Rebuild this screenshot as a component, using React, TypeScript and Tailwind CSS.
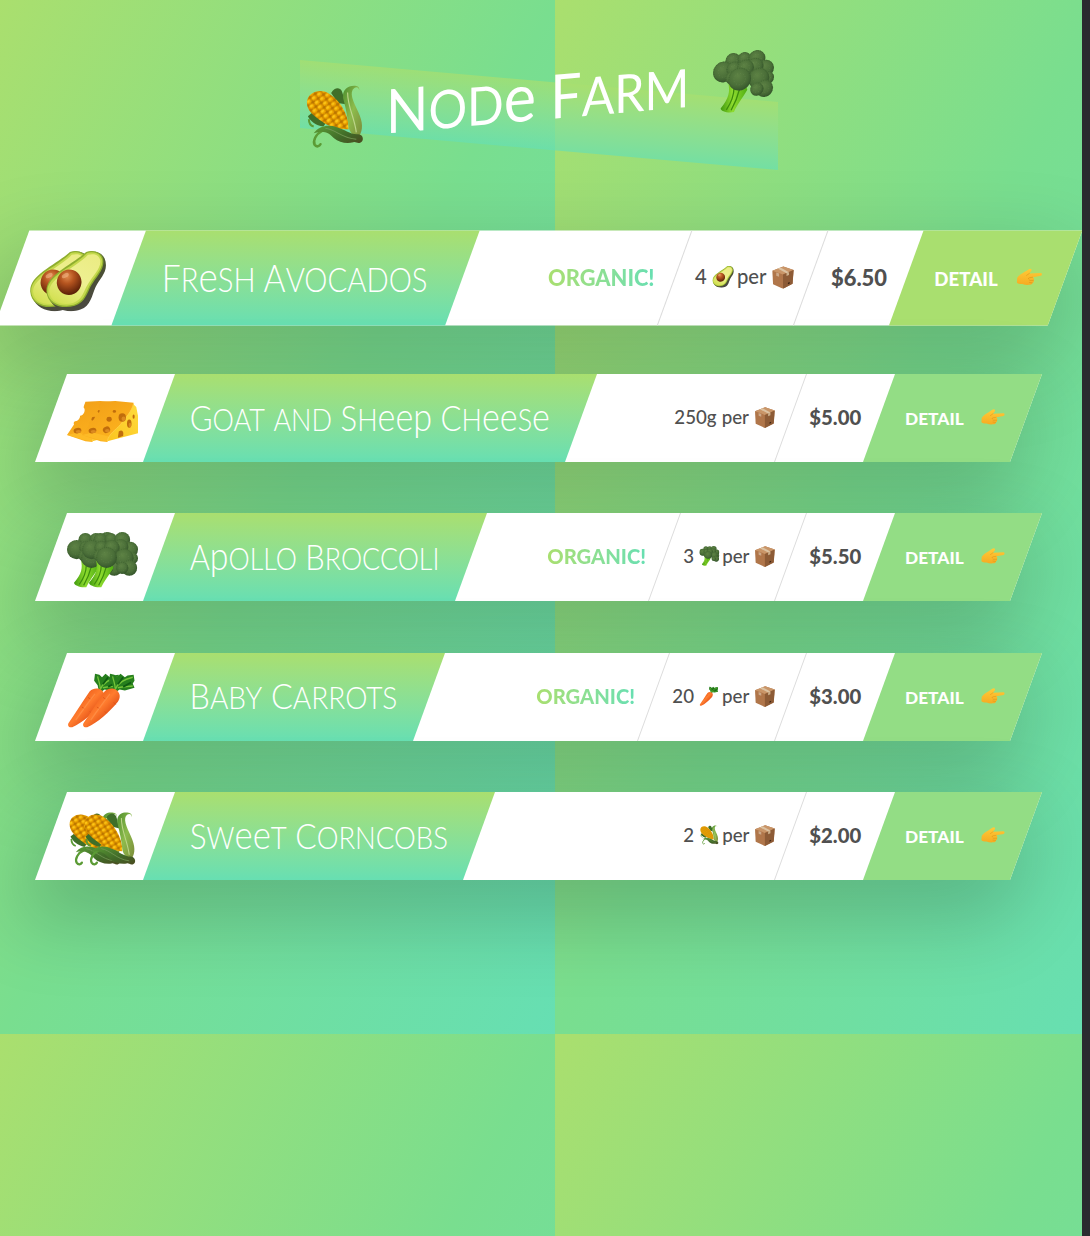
import React from "react";

type IconProps = { className?: string };

function Defs() {
  return (
    <svg width="0" height="0" className="absolute" aria-hidden="true">
      <defs>
        <pattern id="kernels" width="6.4" height="5.8" patternUnits="userSpaceOnUse" patternTransform="rotate(-32)">
          <rect width="6.4" height="5.8" fill="#b87300" />
          <ellipse cx="3.2" cy="2.9" rx="2.9" ry="2.6" fill="#eda400" />
          <ellipse cx="2.9" cy="2.4" rx="1.6" ry="1.2" fill="#ffcc1a" />
        </pattern>
        <linearGradient id="cobShade" x1="0" y1="1" x2="1" y2="0">
          <stop offset="0" stopColor="#a55b00" stopOpacity=".55" />
          <stop offset=".4" stopColor="#e09000" stopOpacity="0" />
          <stop offset="1" stopColor="#b46a00" stopOpacity=".25" />
        </linearGradient>
        <linearGradient id="husk" x1="0" y1="0" x2="1" y2="1">
          <stop offset="0" stopColor="#4f8f2e" />
          <stop offset=".5" stopColor="#8dbb4c" />
          <stop offset="1" stopColor="#7b8b3a" />
        </linearGradient>
        <linearGradient id="leafDark" x1="0" y1="0" x2="1" y2="1">
          <stop offset="0" stopColor="#5b9b35" />
          <stop offset=".6" stopColor="#406a28" />
          <stop offset="1" stopColor="#4b4a20" />
        </linearGradient>
        <radialGradient id="floret" cx=".42" cy=".35" r=".65">
          <stop offset="0" stopColor="#5d8244" />
          <stop offset=".65" stopColor="#4a6e38" />
          <stop offset="1" stopColor="#37572d" />
        </radialGradient>
        <linearGradient id="stalk" x1="0" y1="0" x2="1" y2="0">
          <stop offset="0" stopColor="#3f9a0d" />
          <stop offset=".45" stopColor="#8fdc2f" />
          <stop offset="1" stopColor="#4fae12" />
        </linearGradient>
        <linearGradient id="avoSkin" x1=".3" y1="0" x2=".8" y2="1">
          <stop offset="0" stopColor="#6f8f2c" />
          <stop offset=".5" stopColor="#4a4f33" />
          <stop offset="1" stopColor="#4b4746" />
        </linearGradient>
        <linearGradient id="avoFlesh" x1=".8" y1="0" x2=".2" y2="1">
          <stop offset="0" stopColor="#ebec84" />
          <stop offset=".5" stopColor="#eef092" />
          <stop offset="1" stopColor="#d3e052" />
        </linearGradient>
        <radialGradient id="pit" cx=".35" cy=".32" r=".7">
          <stop offset="0" stopColor="#e08a4c" />
          <stop offset=".4" stopColor="#b5541f" />
          <stop offset="1" stopColor="#5d2108" />
        </radialGradient>
        <linearGradient id="cheeseTop" x1="0" y1="0" x2=".6" y2="1">
          <stop offset="0" stopColor="#f19d17" />
          <stop offset="1" stopColor="#fdb41f" />
        </linearGradient>
        <linearGradient id="cheeseSide" x1="1" y1="0" x2="0" y2="1">
          <stop offset="0" stopColor="#ffdc3c" />
          <stop offset="1" stopColor="#fbc31f" />
        </linearGradient>
        <linearGradient id="carrot" x1="0" y1="0" x2="1" y2="1">
          <stop offset=".25" stopColor="#ee5f1c" />
          <stop offset=".48" stopColor="#ff7c2e" />
          <stop offset=".75" stopColor="#dd4712" />
        </linearGradient>
        <linearGradient id="hand" x1="0" y1="0" x2="0" y2="1">
          <stop offset="0" stopColor="#ffcb38" />
          <stop offset="1" stopColor="#f6ab22" />
        </linearGradient>
      </defs>
    </svg>
  );
}

function Corn({ className }: IconProps) {
  return (
    <svg viewBox="0 0 64 64" className={className} aria-hidden="true">
      <path d="M28 7C32 1 37 2 39 6c2 5 2 9 4 14l-8-2z" fill="#3f6f29" />
      <path d="M4 29c3 6 8 10 16 12l3-4L8 26z" fill="#3f6f29" />
      <path d="M5 32c0 4 2 7 5 8" fill="none" stroke="#5b9b35" strokeWidth="2" />
      <path d="M3 15C3 4 17 1 25 7c11 7 22 24 21 39-8 0-20-4-27-10C8 28 3 22 3 15z" fill="url(#kernels)" />
      <path d="M3 15C3 4 17 1 25 7c11 7 22 24 21 39-8 0-20-4-27-10C8 28 3 22 3 15z" fill="url(#cobShade)" />
      <path
        d="M57 7c1-5-5-6-10-5-6 2-8 7-6 14 2 8 4 17 5 27 1 8 7 12 11 11 4-6 4-14-1-25C51 18 46 8 52 4c3-2 5 1 5 3z"
        fill="url(#husk)"
      />
      <path d="M45 8c0 15 7 26 9 42" fill="none" stroke="#bdd58a" strokeWidth="1.2" />
      <path d="M19 45c-7 3-10 10-8 14 2 3 5 2 6 0" fill="none" stroke="#5b9b35" strokeWidth="2.6" strokeLinecap="round" />
      <path
        d="M10 47c6-7 15-8 24-4 8 3 14 9 22 9 6 1 6 8 2 9-3 1-5-2-7-1-7 1-15-1-20-6-5-6-11-10-21-7z"
        fill="url(#leafDark)"
      />
      <path d="M22 43c11 2 17 12 32 14" fill="none" stroke="#6e9350" strokeWidth="1" />
    </svg>
  );
}

const FLORETS: [number, number, number][] = [
  [21, 9, 8], [33, 8, 7], [46, 9, 9], [11, 20, 11], [55, 20, 9], [44, 17, 9], [22, 18, 8],
  [34, 18, 9], [57, 30, 7], [48, 30, 11], [54, 41, 9], [46, 41, 7], [20, 27, 7], [28, 29, 12],
];

function Broccoli({ className }: IconProps) {
  return (
    <svg viewBox="0 0 64 64" className={className} aria-hidden="true">
      <path d="M16 32c2 9 1 16-8 26 0 3 8 6 14 5 3-7 9-14 14-22l-3-8z" fill="url(#stalk)" />
      <path d="M22 38c0 8-3 15-8 22M28 39c-2 8-5 15-9 22" fill="none" stroke="#3c8c0c" strokeWidth="1.4" />
      {FLORETS.map(([x, y, r], i) => (
        <g key={i}>
          <circle cx={x} cy={y} r={r} fill="url(#floret)" />
          <circle cx={x} cy={y} r={r - 0.7} fill="none" stroke="#36582a" strokeWidth="1" strokeDasharray="1 1.5" opacity=".5" />
          <circle cx={x} cy={y} r={r * 0.5} fill="none" stroke="#76995b" strokeWidth=".9" strokeDasharray=".9 2.2" opacity=".4" />
        </g>
      ))}
    </svg>
  );
}

function Avocado({ className }: IconProps) {
  return (
    <svg viewBox="0 0 64 64" className={className} aria-hidden="true">
      <path d="M46 1c11-2 18 4 18 14 0 9-7 15-11 23-4 9-5 20-16 24-13 5-30-1-33-12z" fill="url(#avoSkin)" />
      <path d="M43 1c9-3 17 1 18 8 2 10-7 18-13 28-4 8-6 17-17 21C17 62 2 57 1 43 0 25 28 15 43 1z" fill="#8fae2f" />
      <path d="M44 2c8-2 15 1 16 8 1 9-8 17-13 26-5 9-6 17-17 21C17 60 3 55 2 43 1 26 30 17 44 2z" fill="#c4d84c" />
      <path d="M45 4c8-2 12 1 13 6 1 8-8 16-13 25-5 8-6 17-16 20C17 58 5 54 4 43 4 28 32 18 45 4z" fill="url(#avoFlesh)" />
      <ellipse cx="25" cy="33" rx="13" ry="13.5" transform="rotate(20 25 33)" fill="url(#pit)" />
      <ellipse cx="21" cy="26" rx="4" ry="2.2" fill="#f7c193" opacity=".5" transform="rotate(-30 21 26)" />
    </svg>
  );
}

function Cheese({ className }: IconProps) {
  return (
    <svg viewBox="0 0 64 64" className={className} aria-hidden="true">
      <path d="M57 11l5 5 2 10v20l-35 9-4-3z" fill="url(#cheeseSide)" />
      <path
        d="M0 48l8-12c-1-2 0-4 3-4 2-1 4-3 4-6 3 0 6-4 5-8-2-2 0-4 1-8l17-1 21 2c-2 10-9 17-15 25-6 7-13 10-15 20l-8-1z"
        fill="url(#cheeseTop)"
      />
      <path d="M0 48l21 6 8 1 3-5-20-5-12 3z" fill="#ffc12b" opacity=".7" />
      <path d="M59 12c-2 9-9 16-15 24-6 7-13 10-15 19" fill="none" stroke="#ffd04a" strokeWidth="1" />
      <g fill="#c06d0c">
        <ellipse cx="12" cy="43" rx="4.5" ry="3.2" transform="rotate(-12 12 43)" />
        <ellipse cx="28" cy="42" rx="4.3" ry="3.6" transform="rotate(-25 28 42)" />
        <ellipse cx="31" cy="30" rx="3" ry="2.8" />
        <ellipse cx="37" cy="21" rx="1.9" ry="1.6" />
        <ellipse cx="46" cy="28" rx="4.2" ry="4.8" />
        <ellipse cx="54" cy="35" rx="2.6" ry="4.6" />
        <path d="M42 44c4-3 6 0 5 5l-6 2z" />
        <ellipse cx="59" cy="27" rx="1.2" ry="2.4" />
      </g>
      <g fill="#dc8a20">
        <ellipse cx="13" cy="44" rx="3" ry="1.8" />
        <ellipse cx="29" cy="43" rx="2.7" ry="2" />
        <ellipse cx="47.5" cy="29.5" rx="2.3" ry="2.6" />
        <ellipse cx="54.8" cy="36.5" rx="1.4" ry="2.5" />
      </g>
    </svg>
  );
}

function Carrot({ className }: IconProps) {
  return (
    <svg viewBox="0 0 64 64" className={className} aria-hidden="true">
      <path d="M36 20l-1-5-4-5 1-8 5 1 3 3 4-4 5 4 3-2 7-1 1 7-2 3 2 5-4 1-7 2-6-1-6 4z" fill="#267f1d" />
      <path d="M38 20C41 12 49 8 58 6M38 19c0-5-2-9-3-14M41 18c7-2 12-1 17-2" fill="none" stroke="#74c43a" strokeWidth="1.5" />
      <path d="M41 14l6-8M47 17l9-5" stroke="#105c12" strokeWidth="2" />
      <path d="M26 22c4-4 10-4 14-1 4 4 4 8 1 13C31 46 18 58 6 63c-4 1-6-2-4-5 8-11 16-25 24-36z" fill="url(#carrot)" />
      <path d="M24 29l3 2M17 40l3 2M36 35l3 2M26 45l2 2" stroke="#d94d15" strokeWidth=".8" />
      <path d="M32 25C24 35 17 45 10 55" fill="none" stroke="#ffa765" strokeWidth="1.5" opacity=".4" />
    </svg>
  );
}

function Package({ className }: IconProps) {
  return (
    <svg viewBox="0 0 64 64" className={className} aria-hidden="true">
      <path d="M2 13L33 1l29 10-3 39-27 14L4 51z" fill="#b0764a" />
      <path d="M2 13L33 1l29 10-30 13z" fill="#c99568" />
      <path d="M32 24l30-13-3 39-27 14z" fill="#8d5b36" />
      <path d="M17 7l8-3 24 13-7 3z" fill="#dcc2a2" />
      <path d="M13 18l8 3v9l-8-3z" fill="#dfccb4" opacity=".6" />
      <path d="M42 20l7-3v8l-7 3z" fill="#cdb08c" />
      <path d="M46 47l5-2v4l-5 2z" fill="#3a2212" />
    </svg>
  );
}

function PointingHand({ className }: IconProps) {
  return (
    <svg viewBox="0 0 64 44" className={className} aria-hidden="true">
      <path
        d="M1 24C5 18 12 14 20 9c5-3 11-8 15-8 4 1 3 5 0 8l-3 4 28-1c5 0 5 6 1 7l-20 4c3 2 4 5 2 8 1 3 0 5-3 6 0 3-3 5-7 5-7 1-13 0-19-2-6 0-13-1-14-4z"
        fill="url(#hand)"
      />
      <path d="M40 23l-8 1c-3 1-3 3-1 4M42 31l-9 0M39 37l-7-1M32 13l-7 5" fill="none" stroke="#d98e18" strokeWidth="1.3" strokeLinecap="round" />
    </svg>
  );
}

/* Small-capital lettering in which "e" and "p" keep their lower-case shapes. */
function Lettering({ text }: { text: string }) {
  const runs = text.match(/[A-Z]|[ep]+|[a-df-oq-z]+| /g) ?? [];
  return (
    <>
      {runs.map((run, i) => {
        if (run === " ") return <span key={i}> </span>;
        if (/^[A-Z]/.test(run)) return <span key={i}>{run}</span>;
        if (/^[ep]/.test(run)) return <span key={i} className="text-[1.1em] leading-none">{run}</span>;
        return <span key={i} className="text-[.87em] uppercase">{run}</span>;
      })}
    </>
  );
}

type Product = {
  name: string;
  Icon: (p: IconProps) => React.ReactElement;
  amount: string;
  showIcon: boolean;
  price: string;
  organic: boolean;
  active: boolean;
  titleWidth: string;
  titleFit: string;
  amountWidth: string;
};

const PRODUCTS: Product[] = [
  { name: "Fresh Avocados", Icon: Avocado, amount: "4", showIcon: true, price: "$6.50", organic: true, active: true, titleWidth: "w-[309px]", titleFit: "[transform:skewX(20deg)_scaleX(0.89)]", amountWidth: "w-[126px]" },
  { name: "Goat and Sheep Cheese", Icon: Cheese, amount: "250g", showIcon: false, price: "$5.00", organic: false, active: false, titleWidth: "w-[422px]", titleFit: "[transform:skewX(20deg)_scaleX(0.888)]", amountWidth: "w-[136px]" },
  { name: "Apollo Broccoli", Icon: Broccoli, amount: "3", showIcon: true, price: "$5.50", organic: true, active: false, titleWidth: "w-[312px]", titleFit: "[transform:skewX(20deg)_scaleX(0.88)]", amountWidth: "w-[126px]" },
  { name: "Baby Carrots", Icon: Carrot, amount: "20", showIcon: true, price: "$3.00", organic: true, active: false, titleWidth: "w-[270px]", titleFit: "[transform:skewX(20deg)_scaleX(0.922)]", amountWidth: "w-[137px]" },
  { name: "Sweet Corncobs", Icon: Corn, amount: "2", showIcon: true, price: "$2.00", organic: false, active: false, titleWidth: "w-[320px]", titleFit: "[transform:skewX(20deg)_scaleX(0.903)]", amountWidth: "w-[126px]" },
];

function Card({ product }: { product: Product }) {
  const { name, Icon, amount, showIcon, price, organic, active, titleWidth, titleFit, amountWidth } = product;
  return (
    <article
      className={`flex h-[88px] w-[974.5px] origin-center bg-white shadow-[0_31px_76px_10px_rgba(0,0,0,0.18)] ${
        active ? "[transform:scale(1.08)_skewX(-20deg)]" : "[transform:skewX(-20deg)]"
      }`}
    >
      <div className="flex w-[107.5px] shrink-0 items-center justify-center">
        <div className="flex pr-1 pt-1.5 [transform:skewX(20deg)]">
          <Icon className="size-14" />
          <Icon className="-ml-[41px] size-14" />
        </div>
      </div>

      <div className={`flex shrink-0 items-center bg-linear-to-b from-[#a9df6f] to-[#67dfb2] pb-1 pl-[30px] ${titleWidth}`}>
        <h2 className={`origin-left whitespace-nowrap font-['Lato'] text-[35px] font-light leading-none text-white ${titleFit}`}>
          <Lettering text={name} />
        </h2>
      </div>

      <div className="flex flex-1 items-stretch justify-end text-[#505050]">
        {organic && (
          <div className="flex items-center pb-0.5 pr-[18px]">
            <span className="whitespace-nowrap bg-linear-to-r from-[#a9df6f] to-[#67dfb2] bg-clip-text font-['Lato'] text-[20.2px] font-black text-transparent [transform:skewX(20deg)]">
              ORGANIC!
            </span>
          </div>
        )}
        <div className={`flex shrink-0 items-center justify-end pb-0.5 pr-[15px] ${amountWidth} ${organic ? "border-l border-[#dcdcdc]" : ""}`}>
          <p className="flex items-center whitespace-nowrap font-['Lato'] text-[18.7px] font-medium [transform:skewX(20deg)]">
            <span>{amount}</span>
            {showIcon && <Icon className="ml-[5px] mr-[3px] size-5" />}
            <span className={showIcon ? "" : "ml-[5px]"}>per</span>
            <Package className="ml-[5px] size-[21px]" />
          </p>
        </div>
        <div className="flex w-[88.5px] shrink-0 items-center justify-center border-l border-[#dcdcdc] pb-0.5">
          <span className="font-['Lato'] text-[20.3px] font-black [transform:skewX(20deg)]">{price}</span>
        </div>
      </div>

      <a
        href="#detail"
        className={`flex w-[147px] shrink-0 items-center pl-[26px] text-white ${active ? "bg-[#a9df6f]" : "bg-[#93dd85]"}`}
      >
        <span className="flex items-center font-['Lato'] text-[17.3px] font-black [transform:skewX(20deg)]">
          <span className="w-[60px] pt-0.5">DETAIL</span>
          <PointingHand className="mb-0.5 ml-4 h-4 w-6" />
        </span>
      </a>
    </article>
  );
}

export default function App() {
  return (
    <div className="flex h-[1236px] w-[1090px] overflow-hidden">
      <Defs />
      <main className="w-[1082px] shrink-0 overflow-hidden bg-[linear-gradient(to_bottom_right,#aadf6e,#79de8f_50%,#66dfb3)] bg-[length:555px_1034px]">
        <header className="relative mx-auto mt-[81px] h-[68px] w-[478px] -translate-x-[2px]">
          <div className="absolute inset-0 bg-linear-to-b from-[#a9df6f] to-[#67dfb2] opacity-70 [transform:skewY(5deg)]" />
          <h1 className="relative flex h-9 items-center justify-between pl-1 pr-1 font-['Lato'] text-[61px] text-white [transform:skewY(-5deg)]">
            <Corn className="size-[62px]" />
            <span className="-ml-1 -mt-2 whitespace-nowrap leading-none [transform:scaleX(0.91)]">
              <Lettering text="Node Farm" />
            </span>
            <Broccoli className="size-[61px]" />
          </h1>
        </header>
        <section className="ml-[51px] mt-[85px] flex flex-col gap-[51.5px]">
          {PRODUCTS.map((product) => (
            <Card key={product.name} product={product} />
          ))}
        </section>
      </main>
      <div className="w-2 shrink-0 bg-[#2a2b2f]" />
    </div>
  );
}
